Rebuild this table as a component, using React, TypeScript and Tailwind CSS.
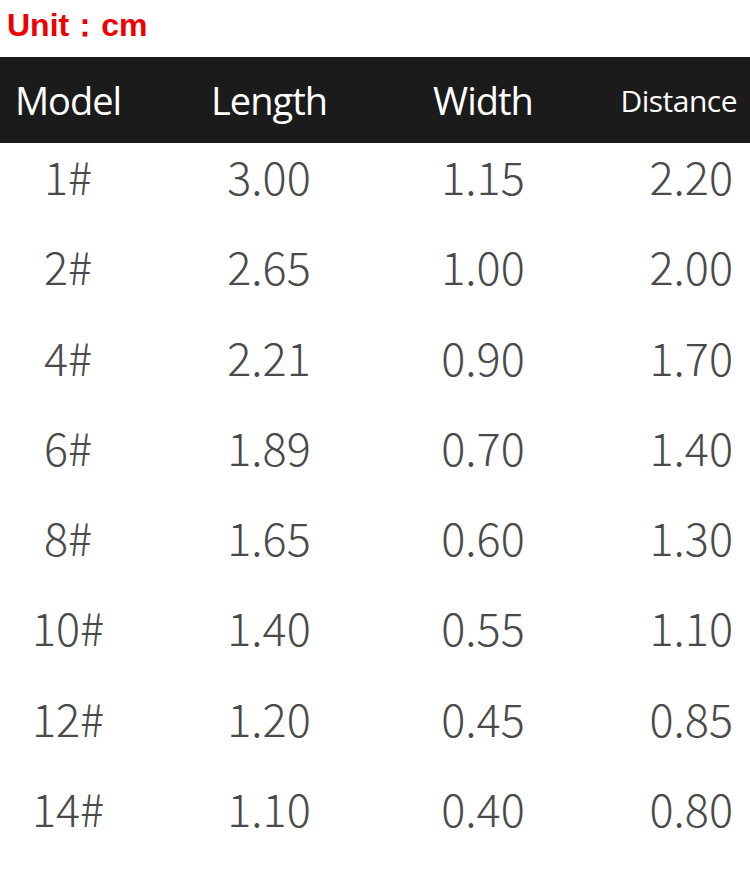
import React from "react";

interface SizeRow {
  model: string;
  length: string;
  width: string;
  distance: string;
}

const rows: SizeRow[] = [
  { model: "1#", length: "3.00", width: "1.15", distance: "2.20" },
  { model: "2#", length: "2.65", width: "1.00", distance: "2.00" },
  { model: "4#", length: "2.21", width: "0.90", distance: "1.70" },
  { model: "6#", length: "1.89", width: "0.70", distance: "1.40" },
  { model: "8#", length: "1.65", width: "0.60", distance: "1.30" },
  { model: "10#", length: "1.40", width: "0.55", distance: "1.10" },
  { model: "12#", length: "1.20", width: "0.45", distance: "0.85" },
  { model: "14#", length: "1.10", width: "0.40", distance: "0.80" },
];

const headFont = { fontFamily: '"Open Sans", "Noto Sans", sans-serif' };
const numFont = { fontFamily: '"Noto Sans CJK SC", "Noto Sans", sans-serif' };

export default function App() {
  return (
    <div className="w-[750px] h-[877px] bg-white overflow-hidden">
      <div
        className="h-[57px] pl-[7px] pt-[3px] text-[32px] leading-[44px] font-bold text-[#ee0000]"
        style={{ fontFamily: '"Liberation Sans", Arial, sans-serif' }}
      >
        Unit：cm
      </div>

      <div className="h-[86px] bg-[#1b1b1b] text-white flex items-center" style={headFont}>
        <div className="w-[136px] text-center text-[38px] tracking-[-1px]">Model</div>
        <div className="w-[266px] text-center text-[38px] tracking-[-1px]">Length</div>
        <div className="w-[162px] text-center text-[38px] tracking-[-1px]">Width</div>
        <div className="flex-1 text-right pr-[13px] text-[30px] tracking-[-0.5px]">Distance</div>
      </div>

      <div className="text-[#4a4a4a]" style={numFont}>
        {rows.map((r) => (
          <div key={r.model} className="h-[90.3px] flex items-start pt-[10px] text-[45px] leading-none font-extralight">
            <div className="w-[136px] text-center">{r.model}</div>
            <div className="w-[266px] text-center">{r.length}</div>
            <div className="w-[162px] text-center">{r.width}</div>
            <div className="flex-1 text-right pr-[17px]">{r.distance}</div>
          </div>
        ))}
      </div>
    </div>
  );
}
